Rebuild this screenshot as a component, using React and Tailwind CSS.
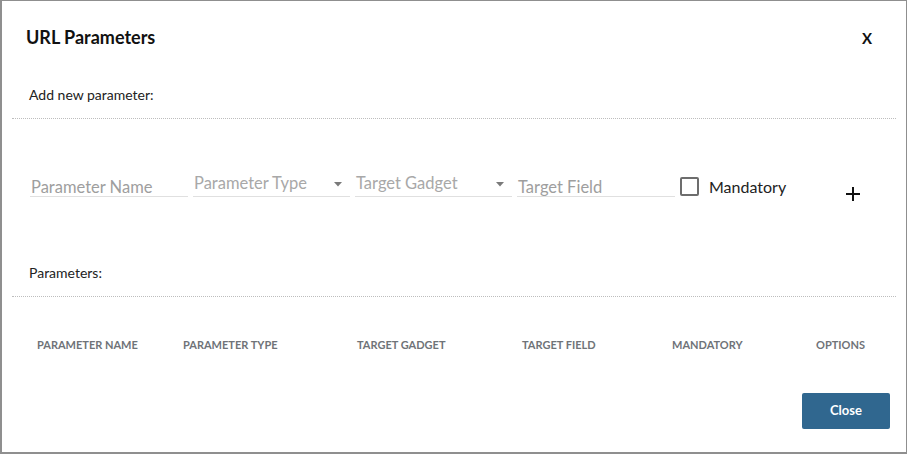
import React from "react";

const font = { fontFamily: "Lato, 'Open Sans', sans-serif" };

function Caret() {
  return (
    <svg width="8" height="5" viewBox="0 0 8 5" className="shrink-0">
      <path d="M0 0 L8 0 L4 4.5 Z" fill="#7a7a7a" />
    </svg>
  );
}

function Plus() {
  return (
    <svg width="14" height="14" viewBox="0 0 14 14">
      <path d="M7 0 V14 M0 7 H14" stroke="#111" strokeWidth="2" />
    </svg>
  );
}

export default function App() {
  return (
    <div
      className="w-[907px] h-[454px] bg-[#8f8f8f] pl-[2px] pt-[1px] pr-[1px] pb-[2px] overflow-hidden"
      style={font}
    >
      <div className="w-full h-full bg-white flex flex-col">
        <div className="flex items-baseline justify-between pl-[24px] pr-[34px] mt-[26px] h-[20px]">
          <h1 className="text-[18px] font-bold text-[#111] leading-[20px]">URL Parameters</h1>
          <span className="text-[15px] font-bold text-[#111] leading-[20px]">X</span>
        </div>
        <div className="pl-[27px] mt-[40px] text-[14px] text-[#222] leading-[16px]">Add new parameter:</div>
        <div className="mx-[10px] mt-[15px] border-t border-dotted border-[#bdbdbd]" />

        <div className="flex items-start pl-[28px] mt-[52px] h-[26px]">
          <div className="w-[158px] h-[26px] border-b border-[#e0e0e0] pt-[8px]">
            <div className="text-[16.5px] text-[#9e9e9e] leading-none pl-[1px]">Parameter Name</div>
          </div>
          <div className="ml-[5px] w-[157px] h-[26px] border-b border-[#e0e0e0] flex items-start justify-between pr-[8px]">
            <span className="text-[16.5px] text-[#a8a8a8] leading-none pl-[1px] pt-[4px]">Parameter Type</span>
            <div className="pt-[11px]"><Caret /></div>
          </div>
          <div className="ml-[5px] w-[157px] h-[26px] border-b border-[#e0e0e0] flex items-start justify-between pr-[8px]">
            <span className="text-[16.5px] text-[#a8a8a8] leading-none pl-[1px] pt-[4px]">Target Gadget</span>
            <div className="pt-[11px]"><Caret /></div>
          </div>
          <div className="ml-[5px] w-[158px] h-[26px] border-b border-[#e0e0e0] pt-[8px]">
            <div className="text-[16.5px] text-[#9e9e9e] leading-none pl-[1px]">Target Field</div>
          </div>
          <div className="ml-[5px] mt-[6px] flex items-center">
            <div className="w-[19px] h-[19px] border-2 border-[#6d6d6d] rounded-[2px]" />
            <span className="ml-[10px] text-[16px] text-[#222] leading-none">Mandatory</span>
          </div>
          <div className="ml-[60px] mt-[16px]"><Plus /></div>
        </div>

        <div className="pl-[27px] mt-[68px] text-[14px] text-[#222] leading-[16px]">Parameters:</div>
        <div className="mx-[10px] mt-[15px] border-t border-dotted border-[#bdbdbd]" />

        <div className="flex items-center mt-[42px] h-[12px] text-[11px] font-bold text-[#6f7378] leading-[12px]">
          <span className="pl-[35px] w-[181px]">PARAMETER NAME</span>
          <span className="w-[174px]">PARAMETER TYPE</span>
          <span className="w-[165px]">TARGET GADGET</span>
          <span className="w-[150px]">TARGET FIELD</span>
          <span className="w-[144px]">MANDATORY</span>
          <span>OPTIONS</span>
        </div>

        <div className="flex justify-end pr-[16px] mt-[42px]">
          <button className="w-[88px] h-[36px] bg-[#30678f] rounded-[2px] text-white text-[13px] font-bold">
            Close
          </button>
        </div>
      </div>
    </div>
  );
}
